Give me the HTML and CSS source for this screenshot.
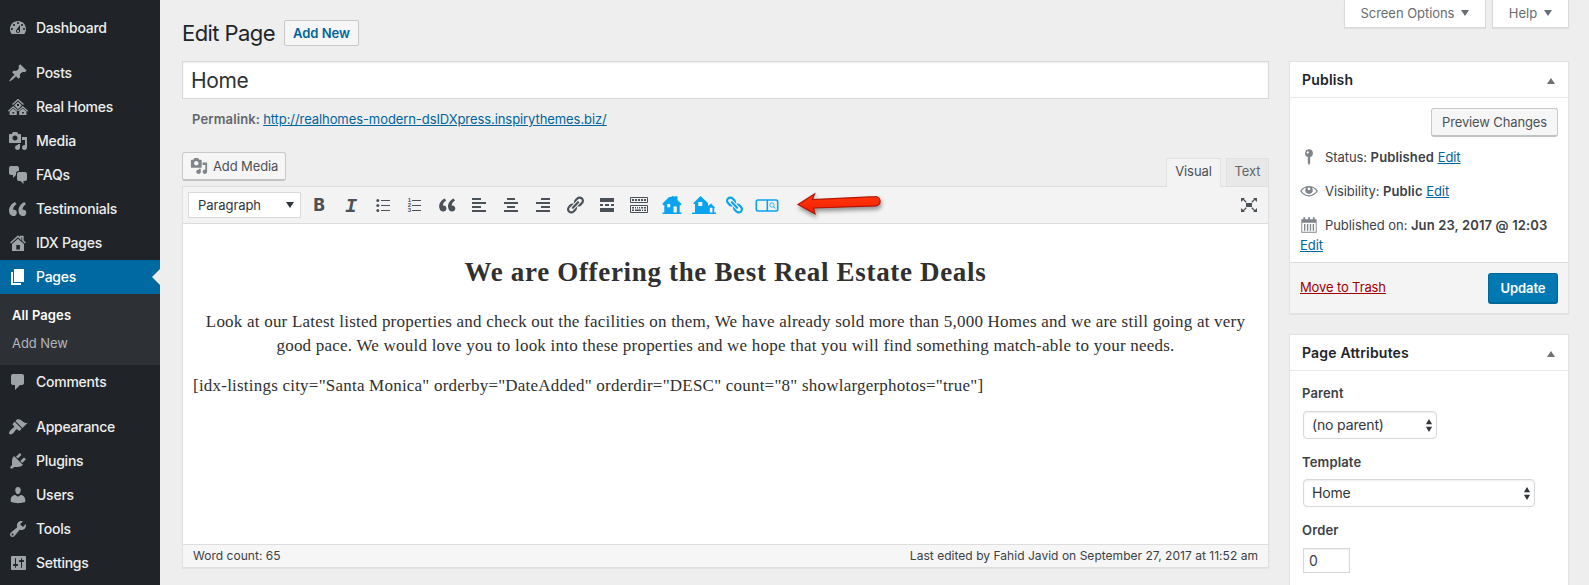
FILE: index.html
```
<!DOCTYPE html>
<html lang="en">
<head>
<meta charset="utf-8">
<title>Edit Page</title>
<link rel="stylesheet" href="styles.css">
</head>
<body>
<svg class="defs" aria-hidden="true">
  <symbol id="media" viewBox="0 0 20 20"><path d="M13 11V4c0-.55-.45-1-1-1h-1.67L9 1H5L3.67 3H2c-.55 0-1 .45-1 1v7c0 .55.45 1 1 1h10c.55 0 1-.45 1-1zM7 4.5c1.38 0 2.5 1.12 2.5 2.5S8.38 9.5 7 9.5 4.5 8.38 4.5 7 5.62 4.5 7 4.5zM14 6h5v10.5c0 1.38-1.12 2.5-2.5 2.5S14 17.88 14 16.5s1.12-2.5 2.5-2.5c.17 0 .34.02.5.05V9h-3V6zm-4 8.05V13h2v3.5c0 1.38-1.12 2.5-2.5 2.5S7 17.88 7 16.5 8.12 14 9.5 14c.17 0 .34.02.5.05z"/></symbol>
  <symbol id="quote" viewBox="0 0 20 20"><path d="M9.49 13.22c0-.74-.2-1.38-.61-1.9-.62-.78-1.83-.88-2.53-.72-.29-1.65 1.11-3.75 2.92-4.65L7.88 4c-2.73 1.3-5.42 4.28-4.96 8.05C3.21 14.43 4.59 16 6.54 16c.85 0 1.56-.25 2.12-.75s.83-1.18.83-2.03zm8.05 0c0-.74-.2-1.38-.61-1.9-.63-.78-1.83-.88-2.53-.72-.29-1.65 1.11-3.75 2.92-4.65L15.93 4c-2.73 1.3-5.41 4.28-4.95 8.05.29 2.38 1.66 3.95 3.61 3.95.85 0 1.56-.25 2.12-.75s.83-1.18.83-2.03z"/></symbol>
  <symbol id="link" viewBox="0 0 20 20"><path d="M17.74 2.76c1.68 1.69 1.68 4.41 0 6.1l-1.53 1.52c-1.12 1.12-2.7 1.47-4.14 1.09l2.62-2.61.76-.77.76-.76c.84-.84.84-2.2 0-3.04-.84-.85-2.2-.85-3.04 0l-.77.76-3.38 3.38c-.37-1.44-.02-3.02 1.1-4.14l1.52-1.53c1.69-1.68 4.42-1.68 6.1 0zM8.59 13.43l5.34-5.34c.42-.42.42-1.1 0-1.52-.44-.43-1.13-.39-1.53 0l-5.33 5.34c-.42.42-.42 1.1 0 1.52.44.43 1.13.39 1.52 0zm-.76 2.29l4.14-4.15c.38 1.44.03 3.02-1.09 4.14l-1.52 1.53c-1.69 1.68-4.41 1.68-6.1 0-1.68-1.68-1.68-4.42 0-6.1l1.53-1.52c1.12-1.12 2.7-1.47 4.14-1.1l-4.14 4.15c-.85.84-.85 2.2 0 3.05.84.84 2.2.84 3.04 0z"/></symbol>
  <symbol id="updown" viewBox="0 0 8 14"><path d="M4 0l3.3 5.6H.7zM4 14L.7 8.4h6.6z"/></symbol>
</svg>
<div class="admin">
  <nav class="menu">
    <a class="item"><svg viewBox="0 0 20 20"><path fill-rule="evenodd" d="M3.76 16h12.48c1.1-1.37 1.76-3.11 1.76-5 0-4.42-3.58-8-8-8s-8 3.58-8 8c0 1.89.66 3.63 1.76 5zM10 4c.55 0 1 .45 1 1s-.45 1-1 1-1-.45-1-1 .45-1 1-1zM6 6c.55 0 1 .45 1 1s-.45 1-1 1-1-.45-1-1 .45-1 1-1zm8 0c.55 0 1 .45 1 1s-.45 1-1 1-1-.45-1-1 .45-1 1-1zm-5.37 5.55L12 7v6c0 1.1-.9 2-2 2s-2-.9-2-2c0-.57.24-1.08.63-1.45zM4 10c.55 0 1 .45 1 1s-.45 1-1 1-1-.45-1-1 .45-1 1-1zm12 0c.55 0 1 .45 1 1s-.45 1-1 1-1-.45-1-1 .45-1 1-1zm-5 3c0-.55-.45-1-1-1s-1 .45-1 1 .45 1 1 1 1-.45 1-1z"/></svg>Dashboard</a>
    <a class="item spaced"><svg viewBox="0 0 20 20"><path d="M10.44 3.02l1.82-1.82 6.36 6.35-1.83 1.82c-1.05-.68-2.48-.57-3.41.36l-.75.75c-.92.93-1.04 2.35-.35 3.41l-1.83 1.82-2.41-2.41-2.8 2.79c-.42.42-3.38 2.71-3.8 2.29s1.86-3.39 2.28-3.81l2.79-2.79L4.1 9.36l1.83-1.82c1.05.69 2.48.57 3.4-.36l.75-.75c.93-.92 1.05-2.35.36-3.41z"/></svg>Posts</a>
    <a class="item"><svg viewBox="0 0 20 20"><g fill="none" stroke="#9ea3a8"><path d="M4.6 7.6L10 2.6l5.4 5" stroke-width="1.4"/><path d="M.4 14.2l4.8-4.4 4.4 4M10.4 13.8l4.4-4 4.8 4.4" stroke-width="1.3"/></g><path fill-rule="evenodd" d="M10 4.8l3.8 3.4-3.8 4-3.8-4zM9 7v2h2V7z"/><path fill-rule="evenodd" d="M1.6 14.6l3.6-3.2 3.6 3.2V18H1.6zM4.4 15v1.6h1.8V15zM11.2 14.6l3.6-3.2 3.6 3.2V18h-7.2zM14 15v1.6h1.8V15z"/></svg>Real Homes</a>
    <a class="item"><svg><use href="#media"/></svg>Media</a>
    <a class="item"><svg viewBox="0 0 20 20"><path d="M11 6h-.82C9.07 6 8 7.2 8 8.16V10l-3 3v-3H3c-1.1 0-2-.9-2-2V3c0-1.1.9-2 2-2h6c1.1 0 2 .9 2 2v3zm0 1h6c1.1 0 2 .9 2 2v5c0 1.1-.9 2-2 2h-1.500v3l-3-3H11c-1.1 0-2-.9-2-2V9c0-1.1.9-2 2-2z"/></svg>FAQs</a>
    <a class="item"><svg viewBox="2 1.5 17 17"><use href="#quote" width="20" height="20"/></svg>Testimonials</a>
    <a class="item"><svg viewBox="0 0 20 20"><path d="M2.600 10L10 3.200l2.700 2.500V3.600h2.200v4.100L17.400 10" fill="none" stroke="#9ea3a8" stroke-width="1.500"/><path fill-rule="evenodd" d="M10 5.700l6 5.400V18H4v-6.900zM8.300 12v4.500h3.600V12z"/></svg>IDX Pages</a>
    <a class="item current"><svg viewBox="0 0 20 20"><path d="M6 15V2h10v13H6zm-1 1h8v2H3V5h2v11z"/></svg>Pages</a>
    <div class="submenu"><a class="active">All Pages</a><a>Add New</a></div>
    <a class="item"><svg viewBox="0 0 20 20"><path d="M5 2h9c1.100 0 2 .9 2 2v7c0 1.100-.9 2-2 2h-2l-5 5v-5H5c-1.100 0-2-.9-2-2V4c0-1.100.9-2 2-2z"/></svg>Comments</a>
    <a class="item spaced"><svg viewBox="0 0 20 20"><path d="M14.48 11.06L7.41 3.99l1.5-1.5c.5-.56 2.3-.47 3.51.32 1.21.8 1.43 1.28 2.91 2.1 1.18.64 2.45 1.26 4.45.85zm-.71.71L6.7 4.7 4.93 6.47c-.39.39-.39 1.02 0 1.41l1.06 1.06c.39.39.39 1.03 0 1.42-.6.6-1.43 1.11-2.21 1.69-.35.26-.7.53-1.01.84C1.43 14.23.4 16.08 1.4 17.07c.99 1 2.84-.03 4.18-1.36.31-.31.58-.66.85-1.02.57-.78 1.08-1.61 1.69-2.21.39-.39 1.02-.39 1.41 0l1.06 1.06c.39.39 1.02.39 1.41 0z"/></svg>Appearance</a>
    <a class="item"><svg viewBox="0 0 20 20"><path d="M13.11 4.36L9.87 7.6 8 5.73l3.24-3.24c.35-.34 1.05-.2 1.56.32.52.51.66 1.21.31 1.55zm-8 1.77l.91-1.12 9.01 9.01-1.19.84c-.71.71-2.63 1.16-3.82 1.16H6.14L4.9 17.26c-.59.59-1.54.59-2.12 0-.59-.58-.59-1.53 0-2.12l1.24-1.24v-3.88c0-1.13.4-3.19 1.09-3.89zm7.26 3.97l3.24-3.24c.34-.35 1.04-.21 1.55.31.52.51.66 1.21.31 1.55l-3.24 3.25z"/></svg>Plugins</a>
    <a class="item"><svg viewBox="0 0 20 20"><path d="M10 9.25c-2.27 0-2.73-3.44-2.73-3.44C7 4.02 7.82 2 9.97 2c2.16 0 2.98 2.02 2.71 3.81 0 0-.41 3.44-2.68 3.44zm0 2.57L12.72 10c2.39 0 4.52 2.33 4.52 4.53v2.49s-3.65 1.13-7.24 1.13c-3.65 0-7.24-1.13-7.24-1.13v-2.49c0-2.25 1.94-4.48 4.47-4.48z"/></svg>Users</a>
    <a class="item"><svg viewBox="0 0 20 20"><path fill-rule="evenodd" d="M16.68 9.77c-1.34 1.34-3.3 1.67-4.95.99l-5.41 6.52c-.99.99-2.59.99-3.58 0s-.99-2.59 0-3.57l6.52-5.42c-.68-1.65-.35-3.61.99-4.95 1.28-1.28 3.12-1.62 4.72-1.06l-2.89 2.89 2.82 2.82 2.86-2.87c.53 1.58.18 3.39-1.08 4.65zM3.81 16.21c.4.39 1.04.39 1.43 0 .4-.4.4-1.04 0-1.43-.39-.4-1.03-.4-1.43 0-.39.39-.39 1.03 0 1.43z"/></svg>Tools</a>
    <a class="item"><svg viewBox="0 0 20 20"><path fill-rule="evenodd" d="M18 16V4c0-.55-.45-1-1-1H4c-.55 0-1 .45-1 1v12c0 .55.45 1 1 1h13c.55 0 1-.45 1-1zM8 11h1c.55 0 1 .45 1 1s-.45 1-1 1H8v1.500c0 .28-.22.5-.5.5s-.5-.22-.5-.5V13H6c-.55 0-1-.45-1-1s.45-1 1-1h1V5.500c0-.28.22-.5.5-.5s.5.22.5.5V11zm5-2h-1c-.55 0-1-.45-1-1s.45-1 1-1h1V5.500c0-.28.22-.5.5-.5s.5.22.5.5V7h1c.55 0 1 .45 1 1s-.45 1-1 1h-1v5.500c0 .28-.22.5-.5.5s-.5-.22-.5-.5V9z"/></svg>Settings</a>
  </nav>

  <div class="page">
    <main class="content">
      <header class="heading"><h1>Edit Page</h1><a class="add-new">Add New</a></header>
      <div class="title-field">Home</div>
      <div class="permalink"><strong>Permalink:</strong><a class="url">http://realhomes-modern-dsIDXpress.inspirythemes.biz/</a></div>
      <div class="tools">
        <a class="button media-button"><svg><use href="#media"/></svg>Add Media</a>
        <div class="tabs"><a class="tab on">Visual</a><a class="tab">Text</a></div>
      </div>
      <section class="editor">
        <div class="toolbar">
          <div class="format">Paragraph<svg viewBox="0 0 8 6"><path d="M0 0h8L4 6z"/></svg></div>
          <div class="icons">
            <span class="b">B</span>
            <span class="i">I</span>
            <span><svg viewBox="0 0 20 20"><path d="M8 5.500h9M8 10.500h9M8 15.500h9" stroke="#4b5158"/><circle cx="4.800" cy="5.500" r="1.500"/><circle cx="4.800" cy="10.500" r="1.500"/><circle cx="4.800" cy="15.500" r="1.500"/></svg></span>
            <span class="ol"><em>1<br>2<br>3</em><svg viewBox="0 0 10 20"><path d="M0 5.500h9M0 10.500h9M0 15.500h9" stroke="#4b5158"/></svg></span>
            <span><svg class="q"><use href="#quote"/></svg></span>
            <span><svg viewBox="0 0 20 20"><path d="M3 3h9v2H3zM3 7h14v2H3zM3 11h9v2H3zM3 15h14v2H3z"/></svg></span>
            <span><svg viewBox="0 0 20 20"><path d="M6 3h8v2H6zM3 7h14v2H3zM6 11h8v2H6zM3 15h14v2H3z"/></svg></span>
            <span><svg viewBox="0 0 20 20"><path d="M8 3h9v2H8zM3 7h14v2H3zM8 11h9v2H8zM3 15h14v2H3z"/></svg></span>
            <span><svg><use href="#link"/></svg></span>
            <span><svg viewBox="0 0 20 20"><path d="M3 3h14v4H3zM3 9h3v2H3zM8 9h4v2H8zM14 9h3v2h-3zM3 13h14v4H3z"/></svg></span>
            <span><svg viewBox="0 0 20 20"><path fill="none" stroke="#4b5158" d="M1.500 2.500h17v5h-17zM1.500 10.500h17v7h-17z"/><path d="M3 4h2v2H3zM6 4h2v2H6zM9 4h2v2H9zM12 4h2v2h-2zM15 4h2v2h-2zM3 12h2v1.500H3zM6 12h1v1.500H6zM8 12h1v1.500H8zM10 12h1v1.500h-1zM12 12h2v1.500h-2zM15 12h2v1.500h-2zM3 14.500h2V16H3zM6 14.500h6V16H6zM13 14.500h1V16h-1zM15 14.500h2V16h-2z"/></svg></span>
            <span class="blue"><svg class="house" viewBox="0 0 20 20"><path fill-rule="evenodd" d="M.5 8.500L7 2h2L10.500.800 12.500 2V1.300h3V5l4 4-.6 1.200H17.700V17.500H19.500V19H.5v-1.500h1.800v-7.300H1zM5.200 9v3.200h3V9zM11.500 11.500v6h3.300v-6z"/></svg></span>
            <span class="blue"><svg class="wide" viewBox="0 0 24 20"><path fill-rule="evenodd" d="M1.500 8L8.500 1 16 8v3l3-2.500 4 4-.8 1V17.500H24V19H0v-1.500h3V9H1.500zM6.300 7v4h4V7zM17.800 12.800v4.700h2.700v-4.700z"/></svg></span>
            <span class="blue link"><svg class="chain"><use href="#link"/></svg></span>
            <span class="blue link"><svg class="wide" viewBox="0 0 24 20"><path d="M3 5h18q1.700 0 1.700 1.700v7.600q0 1.700-1.700 1.700H3q-1.700 0-1.700-1.700V6.700Q1.300 5 3 5zM12.300 5v11" fill="none" stroke="#0aa4ee" stroke-width="1.600"/><circle cx="17" cy="10" r="2.200" fill="none" stroke="#0aa4ee" stroke-width=".8"/><path d="M18.600 11.600l1.700 1.900" stroke="#0aa4ee"/></svg></span>
          </div>
          <svg class="arrow" viewBox="0 0 90 28"><defs><linearGradient id="red" x2="0" y2="1"><stop stop-color="#ff3a0c"/><stop offset="1" stop-color="#f41b00"/></linearGradient></defs><path d="M3 13.500L19.500 3l-2 5.500L80 5.700a4.600 4.600 0 0 1 1 9.200L18.500 17l1.500 5.800z" fill="url(#red)" stroke="#b41405" stroke-width="1.200"/></svg>
          <svg class="full" viewBox="0 0 20 20"><path d="M7 8h6v4H7zM2 3h4L4.900 4.100l2.800 2.700-.9.900L4.100 5 2 7zM18 3h-4l1.100 1.100-2.800 2.700.9.900L15.900 5 18 7zM2 17h4l-1.100-1.100 2.800-2.700-.9-.9L4.100 15 2 13zM18 17h-4l1.100-1.100-2.800-2.700.9-.9L15.900 15 18 13z"/></svg>
        </div>
        <article class="body">
          <h2>We are Offering the Best Real Estate Deals</h2>
          <p class="center">Look at our Latest listed properties and check out the facilities on them, We have already sold more than 5,000 Homes and we are still going at very<br>good pace. We would love you to look into these properties and we hope that you will find something match-able to your needs.</p>
          <p>[idx-listings city="Santa Monica" orderby="DateAdded" orderdir="DESC" count="8" showlargerphotos="true"]</p>
        </article>
        <footer class="status"><span>Word count: 65</span><span>Last edited by Fahid Javid on September 27, 2017 at 11:52 am</span></footer>
      </section>
    </main>

    <aside class="side">
      <div class="screen-tabs">
        <a class="wide-tab">Screen Options<svg viewBox="0 0 8 6"><path d="M0 0h8L4 6z"/></svg></a>
        <a>Help<svg viewBox="0 0 8 6"><path d="M0 0h8L4 6z"/></svg></a>
      </div>
      <section class="box">
        <h3>Publish<svg viewBox="0 0 8 6"><path d="M0 6h8L4 0z"/></svg></h3>
        <div class="publish">
          <a class="button preview">Preview Changes</a>
          <div class="row"><svg viewBox="0 0 20 20"><path fill-rule="evenodd" d="M10 1.500a4.300 4.300 0 0 1 1.300 8.400V17L10 19l-1.300-2V9.900A4.300 4.300 0 0 1 10 1.500zM8.500 3.700a1.200 1.200 0 1 0 .1 0z"/></svg><div>Status: <strong>Published</strong> <a>Edit</a></div></div>
          <div class="row"><svg viewBox="0 0 20 20"><path fill-rule="evenodd" d="M19.500 9.500C17.400 6.300 13.800 4.500 10 4.500S2.600 6.300.5 9.500l-.3.500.3.500c2.100 3.200 5.700 5.500 9.500 5.500s7.400-2.300 9.500-5.500l.3-.5zM10 14.700c-3.200 0-6.400-1.800-8.200-4.700 1.400-2 3-3.300 5.200-3.900-.8.900-1.200 1.900-1.200 2.900a4.200 4.200 0 0 0 8.400 0c0-1-.4-2-1.200-2.900 2.200.6 3.800 1.900 5.200 3.900-1.800 2.900-5 4.700-8.200 4.700zM10 6.200a1.500 1.500 0 1 1-.1 0z"/></svg><div>Visibility: <strong>Public</strong> <a>Edit</a></div></div>
          <div class="row date"><svg viewBox="0 0 20 20"><path fill-rule="evenodd" d="M1.500 3.500h2.200V1.500h2v2h3.300v-2h2v2h3.300v-2h2v2h2.200V18.500h-17zM2.500 7.500v10h15v-10zM4.500 9H6v7.500H4.500zM7.700 9h1.500v7.500H7.700zM10.900 9h1.500v7.500h-1.500zM14.100 9h1.500v7.500h-1.500z"/></svg><div>Published on: <strong>Jun 23, 2017 @ 12:03</strong></div></div>
          <a class="edit-date">Edit</a>
        </div>
        <div class="actions"><a class="trash">Move to Trash</a><a class="update">Update</a></div>
      </section>
      <section class="box attributes">
        <h3>Page Attributes<svg viewBox="0 0 8 6"><path d="M0 6h8L4 0z"/></svg></h3>
        <div class="fields">
          <label>Parent</label>
          <div class="select parent">(no parent)<svg><use href="#updown"/></svg></div>
          <label>Template</label>
          <div class="select">Home<svg><use href="#updown"/></svg></div>
          <label>Order</label>
          <div class="order">0</div>
        </div>
      </section>
    </aside>
  </div>
</div>
</body>
</html>
```
FILE: styles.css
```
* { box-sizing: border-box; }
body { margin: 0; background: #eee; color: #3c4146; font: 13px/20px Inter, "Liberation Sans", sans-serif; letter-spacing: -.07px; overflow: hidden; }
svg { fill: currentColor; flex: none; display: block; }
h1, h2, h3, p { margin: 0; }
strong { font-weight: 600; letter-spacing: .14px; }
.defs { position: absolute; width: 0; height: 0; }
.admin { display: flex; height: 585px; overflow: hidden; white-space: nowrap; }

.menu { width: 160px; background: #202428; padding-top: 11px; flex: none; }
.item { display: flex; align-items: center; height: 34px; padding-left: 8px; gap: 8px; color: #eee; font-size: 14px; font-weight: 500; letter-spacing: -.25px; }
.item svg { width: 20px; height: 20px; color: #9ea3a8; }
.item.spaced { margin-top: 11px; }
.item.current { background: #0069a2; color: #fff; position: relative; }
.item.current svg { color: #fff; }
.item.current::after { content: ""; position: absolute; right: 0; top: 9px; border: 8px solid transparent; border-left: 0; border-right-color: #eee; }
.submenu { height: 71px; background: #2d3136; padding: 7px 12px; display: flex; flex-direction: column; }
.submenu a { line-height: 28px; color: #b2b6ba; }
.submenu .active { color: #fff; font-weight: 600; letter-spacing: .1px; }

.page { flex: 1; display: flex; gap: 20px; padding: 0 20px 0 22px; }
.content { width: 1087px; flex: none; }
.heading { display: flex; padding-top: 20px; height: 61px; gap: 9px; }
h1 { font-size: 22px; font-weight: 400; line-height: 26px; letter-spacing: -.58px; color: #20252a; width: 93px; }
.add-new { height: 26px; width: 75px; border: 1px solid #c8c8c8; border-radius: 2px; background: #f6f6f6; color: #00659c; font-weight: 600; text-align: center; line-height: 25px; letter-spacing: 0; }
.title-field { height: 38px; border: 1px solid #d8d8d8; background: #fff; box-shadow: inset 0 1px 2px rgba(0,0,0,.07); padding-left: 8px; font-size: 21px; line-height: 37px; letter-spacing: -.35px; color: #2d3237; }
.permalink { display: flex; gap: 3px; padding: 10px 10px 0; height: 53px; color: #63676b; }
.url { color: #00659c; text-decoration: underline; letter-spacing: -.08px; }
.tools { display: flex; justify-content: space-between; height: 34px; }
.button { display: block; height: 29px; border: 1px solid #c9c9c9; border-bottom: 2px solid #c2c2c2; border-radius: 3px; background: #f6f6f6; color: #4e5256; line-height: 27px; text-align: center; }
.media-button { display: flex; align-items: center; width: 104px; gap: 5px; padding-left: 7px; letter-spacing: -.12px; }
.media-button svg { width: 18px; height: 18px; color: #7f858a; }
.tabs { display: flex; gap: 5px; padding-top: 6px; }
.tab { height: 28px; width: 43px; border: 1px solid #e1e1e1; border-bottom: 0; background: #e8e8e8; color: #63676b; line-height: 25px; text-align: center; }
.tab.on { width: 55px; height: 29px; background: #f3f3f3; color: #4b5055; z-index: 1; }

.editor { height: 382px; border: 1px solid #dfdfdf; background: #fff; box-shadow: 0 1px 1px rgba(0,0,0,.04); display: flex; flex-direction: column; }
.toolbar { display: flex; align-items: center; height: 37px; background: #f3f3f3; border-bottom: 1px solid #dcdcdc; padding: 0 9px 0 5px; color: #4b5158; flex: none; }
.format { display: flex; justify-content: space-between; align-items: center; width: 113px; height: 26px; border: 1px solid #d9d9d9; background: #fff; color: #31363b; padding: 0 6px 0 9px; }
.format svg { width: 8px; height: 6px; }
.icons { display: flex; margin-left: 2px; }
.icons span { width: 32px; height: 26px; display: flex; justify-content: center; align-items: center; }
.icons svg { width: 20px; height: 20px; }
.icons .b { font: 800 17px/26px Inter, sans-serif; }
.icons .i { font: italic 700 20px/26px "Liberation Mono", monospace; padding-top: 3px; }
.ol em { font: 700 6px/5px "Liberation Sans", sans-serif; padding-right: 1px; }
.icons .ol svg { width: 10px; }
.icons .q { width: 22px; height: 22px; }
.icons .blue { color: #0aa4ee; padding-left: 2px; }
.icons .blue.link { padding: 0 1px 0 0; }
.icons .wide { width: 24px; height: 20px; }
.icons .chain { transform: scaleX(-1); }
.arrow { width: 90px; height: 28px; margin-left: 12px; filter: drop-shadow(1px 3px 2px rgba(0,0,0,.4)); }
.full { width: 20px; height: 20px; margin-left: auto; }

.body { flex: 1; padding: 29px 10px 0; font: 17px/24px "Liberation Serif", serif; letter-spacing: .218px; color: #303030; }
.body h2 { font-size: 27px; line-height: 38px; text-align: center; letter-spacing: .67px; margin-bottom: 19px; }
.body p { margin-bottom: 16px; }
.body .center { text-align: center; }
.status { display: flex; justify-content: space-between; height: 23px; border-top: 1px solid #dedede; background: #f6f6f6; padding: 0 10px; font-size: 12px; line-height: 22px; letter-spacing: .03px; }

.side { width: 280px; flex: none; }
.screen-tabs { display: flex; justify-content: flex-end; gap: 6px; height: 61px; }
.screen-tabs a { display: flex; align-items: center; justify-content: center; gap: 7px; width: 77px; height: 28px; padding-bottom: 1px; background: #fff; border: 1px solid #d9d9d9; border-top: 0; box-shadow: 0 1px 1px rgba(0,0,0,.06); color: #686d72; letter-spacing: 0; }
.screen-tabs .wide-tab { width: 142px; letter-spacing: -.05px; }
.screen-tabs svg { width: 8px; height: 6px; }
.box { border: 1px solid #e1e1e1; background: #fff; box-shadow: 0 1px 1px rgba(0,0,0,.04); }
h3 { display: flex; align-items: center; justify-content: space-between; height: 36px; border-bottom: 1px solid #e8e8e8; padding: 0 13px 0 12px; font-size: 14px; font-weight: 600; letter-spacing: .18px; color: #20252a; }
h3 svg { width: 8px; height: 6px; margin-top: 3px; color: #6c7176; }
.publish { height: 164px; padding: 10px 10px 0; display: flex; flex-direction: column; }
.preview { width: 127px; align-self: flex-end; letter-spacing: -.13px; margin-bottom: 10px; }
.row { display: flex; gap: 7px; height: 20px; margin-bottom: 14px; }
.row svg { width: 18px; height: 18px; color: #7f858a; margin-top: 1px; }
.row.date { margin-bottom: 0; }
.row a, .edit-date { color: #00659c; text-decoration: underline; }
.actions { display: flex; justify-content: space-between; height: 51px; border-top: 1px solid #dcdcdc; background: #f4f4f4; padding: 10px; }
.trash { color: #a00000; text-decoration: underline; line-height: 29px; letter-spacing: -.13px; }
.update { width: 70px; height: 31px; background: #0079b3; border: 1px solid #006799; border-bottom-width: 2px; border-radius: 3px; color: #fff; font-weight: 600; line-height: 29px; text-align: center; letter-spacing: -.1px; }
.attributes { margin-top: 20px; height: 300px; }
.fields { padding: 12px 13px; display: flex; flex-direction: column; }
label { font-weight: 600; letter-spacing: .14px; margin-left: -1px; }
.select { display: flex; align-items: center; justify-content: space-between; width: 232px; height: 28px; margin: 7px 0 13px; border: 1px solid #d8d8d8; border-radius: 4px; box-shadow: inset 0 1px 2px rgba(0,0,0,.07); padding: 0 3px 0 8px; font-size: 14px; letter-spacing: -.15px; color: #31363b; }
.parent { width: 134px; margin: 8px 0 13px; }
.select svg { width: 8px; height: 13px; }
.order { width: 47px; height: 25px; margin-top: 8px; border: 1px solid #d8d8d8; box-shadow: inset 0 1px 2px rgba(0,0,0,.07); padding-left: 5px; font-size: 14px; line-height: 24px; }
```
